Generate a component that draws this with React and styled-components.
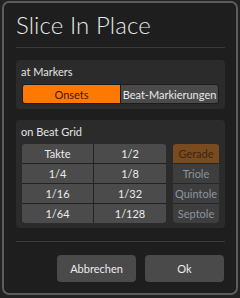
import React from 'react';
import styled, { createGlobalStyle } from 'styled-components';

const GlobalStyle = createGlobalStyle`
  html, body {
    margin: 0;
    padding: 0;
    background: #222222;
    font-family: Lato, 'Open Sans', sans-serif;
  }
`;

const Dialog = styled.div`
  box-sizing: border-box;
  width: 236px;
  height: 294px;
  margin: 1px 2px;
  border: 2px solid #5c5c5c;
  border-radius: 7px;
  background: #1e1e1e;
  padding: 10px 11px 0 12px;
  display: flex;
  flex-direction: column;
`;

const Title = styled.h1`
  margin: 0;
  font-size: 24px;
  line-height: 24px;
  font-weight: 300;
  color: #e6e6e6;
  letter-spacing: 0.1px;
`;

const Divider = styled.div`
  height: 1px;
  background: #3a3a3a;
  margin: ${({ $top }) => $top}px 0 ${({ $bottom }) => $bottom}px;
`;

const Panel = styled.section`
  background: #2b2b2b;
  border-radius: 4px;
  padding: 5px 6px 5px 6px;
  display: flex;
  flex-direction: column;
  gap: 6px;
  margin-bottom: ${({ $gap }) => $gap || 0}px;
`;

const Label = styled.div`
  font-size: 11px;
  line-height: 13px;
  color: #e4e4e4;
  margin-left: -1px;
`;

const Segmented = styled.div`
  display: grid;
  grid-template-columns: 1fr 1fr;
  gap: 1px;
  background: #1c1c1c;
  border: 1px solid #1c1c1c;
  border-radius: 3px;
  overflow: hidden;
`;

const Segment = styled.div`
  height: 18px;
  display: flex;
  align-items: center;
  justify-content: center;
  font-size: 11px;
  background: ${({ $active }) => ($active ? '#ff7800' : '#4a4a4a')};
  color: ${({ $active }) => ($active ? '#3a1c00' : '#e8e8e8')};
`;

const GridRow = styled.div`
  display: flex;
  gap: 7px;
`;

const ValueGrid = styled.div`
  width: 144px;
  display: grid;
  grid-template-columns: 71px 72px;
  gap: 1px;
  background: #232323;
  border-radius: 3px;
  overflow: hidden;
`;

const Cell = styled.div`
  height: 19px;
  display: flex;
  align-items: center;
  justify-content: center;
  font-size: 11px;
  background: #4b4b4b;
  color: #ececec;
`;

const TupletColumn = styled.div`
  width: 46px;
  display: flex;
  flex-direction: column;
  gap: 1px;
  background: #262626;
  border-radius: 3px;
  overflow: hidden;
`;

const Tuplet = styled.div`
  height: 19px;
  display: flex;
  align-items: center;
  justify-content: center;
  font-size: 11px;
  background: ${({ $active }) => ($active ? '#7a4b1f' : '#3e3e3e')};
  color: ${({ $active }) => ($active ? '#3a2614' : '#8b95a0')};
`;

const Footer = styled.div`
  display: flex;
  justify-content: flex-end;
  gap: 9px;
  padding-right: 1px;
`;

const Button = styled.button`
  width: 79px;
  height: 27px;
  border: none;
  border-radius: 4px;
  background: #4a4a4a;
  color: #ececec;
  font-family: Lato, 'Open Sans', sans-serif;
  font-size: 11px;
  padding: 0;
`;

const values = ['Takte', '1/2', '1/4', '1/8', '1/16', '1/32', '1/64', '1/128'];
const tuplets = ['Gerade', 'Triole', 'Quintole', 'Septole'];

export default function App() {
  return (
    <>
      <GlobalStyle />
      <Dialog>
        <Title>Slice In Place</Title>
        <Divider $top={10} $bottom={12} />
        <Panel $gap={11}>
          <Label>at Markers</Label>
          <Segmented>
            <Segment $active>Onsets</Segment>
            <Segment>Beat-Markierungen</Segment>
          </Segmented>
        </Panel>
        <Panel>
          <Label>on Beat Grid</Label>
          <GridRow>
            <ValueGrid>
              {values.map((v) => (
                <Cell key={v}>{v}</Cell>
              ))}
            </ValueGrid>
            <TupletColumn>
              {tuplets.map((t, i) => (
                <Tuplet key={t} $active={i === 0}>
                  {t}
                </Tuplet>
              ))}
            </TupletColumn>
          </GridRow>
        </Panel>
        <Divider $top={13} $bottom={13} />
        <Footer>
          <Button>Abbrechen</Button>
          <Button>Ok</Button>
        </Footer>
      </Dialog>
    </>
  );
}
